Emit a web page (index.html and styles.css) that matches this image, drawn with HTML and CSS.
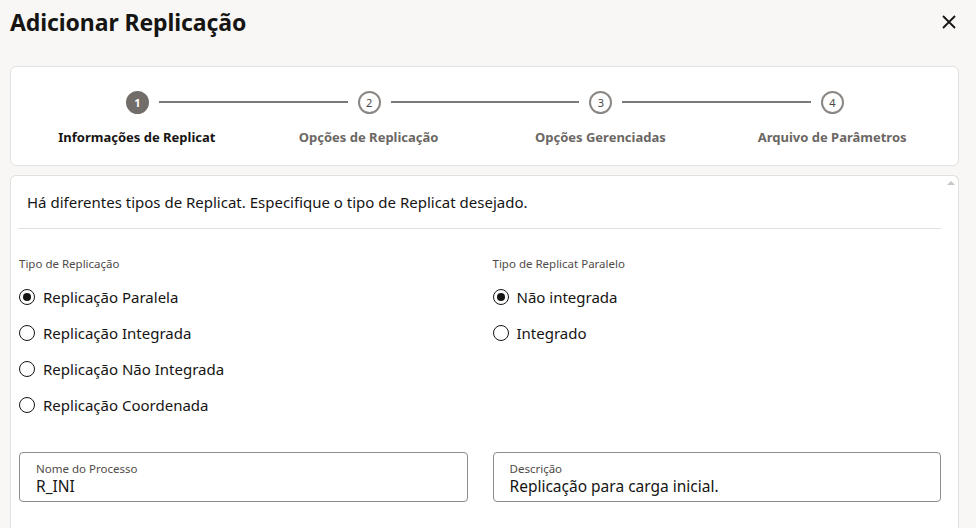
FILE: index.html
```html
<!DOCTYPE html>
<html lang="pt-BR">
<head>
<meta charset="utf-8">
<title>Adicionar Replicação</title>
<link rel="stylesheet" href="styles.css">
</head>
<body>
<div class="dialog">
  <header class="dlg-head">
    <h1 class="dlg-title">Adicionar Replicação</h1>
    <button class="close-btn" aria-label="Fechar">
      <svg width="16" height="16" viewBox="0 0 16 16"><path d="M2 2 L14 14 M14 2 L2 14" stroke="#161513" stroke-width="1.8" fill="none"/></svg>
    </button>
  </header>

  <section class="card stepper">
    <div class="track">
      <span class="dot dot-active">1</span>
      <span class="connector"></span>
      <span class="dot">2</span>
      <span class="connector"></span>
      <span class="dot">3</span>
      <span class="connector"></span>
      <span class="dot">4</span>
    </div>
    <div class="step-labels">
      <span class="step-label step-label-active">Informações de Replicat</span>
      <span class="step-label">Opções de Replicação</span>
      <span class="step-label">Opções Gerenciadas</span>
      <span class="step-label">Arquivo de Parâmetros</span>
    </div>
  </section>

  <section class="card form-card">
    <span class="scroll-arrow"></span>
    <div class="form-inner">
      <p class="intro">Há diferentes tipos de Replicat. Especifique o tipo de Replicat desejado.</p>
      <div class="columns">
        <div class="col">
          <div class="group-label">Tipo de Replicação</div>
          <div class="radio-list">
            <label class="radio"><span class="radio-mark checked"></span>Replicação Paralela</label>
            <label class="radio"><span class="radio-mark"></span>Replicação Integrada</label>
            <label class="radio"><span class="radio-mark"></span>Replicação Não Integrada</label>
            <label class="radio"><span class="radio-mark"></span>Replicação Coordenada</label>
          </div>
          <div class="field">
            <span class="field-label">Nome do Processo</span>
            <span class="field-value">R_INI</span>
          </div>
        </div>
        <div class="col">
          <div class="group-label">Tipo de Replicat Paralelo</div>
          <div class="radio-list">
            <label class="radio"><span class="radio-mark checked"></span>Não integrada</label>
            <label class="radio"><span class="radio-mark"></span>Integrado</label>
          </div>
          <div class="spacer"></div>
          <div class="field">
            <span class="field-label">Descrição</span>
            <span class="field-value">Replicação para carga inicial.</span>
          </div>
        </div>
      </div>
    </div>
  </section>
</div>
</body>
</html>
```

FILE: styles.css
```css
* { box-sizing: border-box; }
html, body { margin: 0; padding: 0; }
body {
  background: #f8f7f5;
  font-family: "Noto Sans", "Open Sans", sans-serif;
  color: #161513;
  height: 528px;
  overflow: hidden;
}
.dialog {
  height: 528px;
  padding: 0 17px 0 10px;
  display: flex;
  flex-direction: column;
}
.dlg-head {
  height: 66px;
  flex: none;
  display: flex;
  align-items: flex-start;
  justify-content: space-between;
}
.dlg-title {
  margin: 6px 0 0 0;
  font-size: 23px;
  line-height: 32px;
  font-weight: 700;
  letter-spacing: -0.1px;
}
.close-btn {
  margin: 12px 0 0 0;
  width: 20px;
  height: 20px;
  padding: 0;
  border: 0;
  background: none;
  display: flex;
  align-items: center;
  justify-content: center;
}
.card {
  background: #fff;
  border: 1px solid #e2e0dd;
  border-radius: 6px;
}
.stepper {
  height: 100px;
  flex: none;
  padding: 23px 10px 0 10px;
}
.track {
  display: flex;
  align-items: center;
  padding: 0 104px 0 105px;
  height: 24px;
}
.dot {
  width: 23px;
  height: 23px;
  border-radius: 50%;
  border: 2px solid #8b8784;
  display: flex;
  align-items: center;
  justify-content: center;
  font-size: 11px;
  color: #4a4643;
  flex: none;
}
.dot-active {
  background: #726d69;
  border-color: #726d69;
  color: #fff;
  font-weight: 700;
}
.connector {
  flex: 1;
  height: 2px;
  background: #7d7976;
  margin: 0 10px;
}
.step-labels {
  display: grid;
  grid-template-columns: repeat(4, 1fr);
  margin-top: 14px;
}
.step-label {
  text-align: center;
  font-size: 13px;
  font-weight: 700;
  color: #6b6764;
  line-height: 18px;
}
.step-label-active { color: #161513; }

.form-card {
  margin-top: 9px;
  flex: 1;
  min-height: 0;
  overflow: hidden;
  position: relative;
  border-bottom: 0;
  border-radius: 6px 6px 0 0;
}
.scroll-arrow {
  position: absolute;
  right: 3px;
  top: 5px;
  width: 0;
  height: 0;
  border-left: 4px solid transparent;
  border-right: 4px solid transparent;
  border-bottom: 4px solid #c8c6c3;
}
.form-inner {
  padding: 0 17px 0 7px;
}
.intro {
  margin: 0;
  padding: 15px 0 15px 9px;
  font-size: 15px;
  line-height: 22px;
  border-bottom: 1px solid #e2e0dd;
}
.columns {
  display: grid;
  grid-template-columns: 1fr 1fr;
  column-gap: 25px;
  padding-left: 1px;
  padding-top: 27px;
}
.col {
  display: flex;
  flex-direction: column;
}
.group-label {
  font-size: 11.5px;
  line-height: 16px;
  color: #4f4b48;
}
.radio-list {
  display: flex;
  flex-direction: column;
  margin-top: 7px;
}
.radio {
  display: flex;
  align-items: center;
  height: 36px;
  font-size: 15px;
  color: #161513;
}
.radio-mark {
  width: 16px;
  height: 16px;
  border: 1.5px solid #161513;
  border-radius: 50%;
  margin-right: 8px;
  display: flex;
  align-items: center;
  justify-content: center;
  flex: none;
}
.radio-mark.checked::after {
  content: "";
  width: 8px;
  height: 8px;
  border-radius: 50%;
  background: #161513;
}
.spacer { flex: 1; }
.field {
  margin-top: 29px;
  height: 50px;
  border: 1px solid #8f8b88;
  border-radius: 4px;
  padding: 9px 16px 0 16px;
  display: flex;
  flex-direction: column;
}
.field-label {
  font-size: 11.5px;
  line-height: 14px;
  color: #4f4b48;
}
.field-value {
  font-size: 15.5px;
  line-height: 20px;
  color: #161513;
}
```
